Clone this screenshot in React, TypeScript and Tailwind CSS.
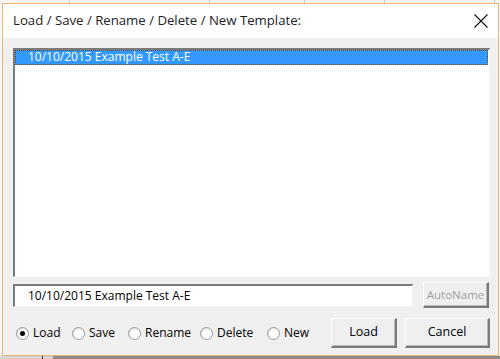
import React from "react"

const font = { fontFamily: '"Open Sans", "Noto Sans", sans-serif' }

function Radio({ label, checked, w }: { label: string; checked?: boolean; w: string }) {
  return (
    <label className={"flex items-center gap-[4px] text-[12px] text-black " + w}>
      <span className="w-[13px] h-[13px] rounded-full border border-[#9a9a9a] bg-white flex items-center justify-center shadow-[inset_1px_1px_1px_rgba(0,0,0,0.12)]">
        {checked && <span className="w-[5px] h-[5px] rounded-full bg-black" />}
      </span>
      <span>{label}</span>
    </label>
  )
}

function WinButton({ label, className, disabled }: { label: string; className: string; disabled?: boolean }) {
  return (
    <button
      className={
        "bg-[#efefef] border-t border-l border-t-white border-l-white border-r-2 border-b-2 border-r-[#7a7a7a] border-b-[#7a7a7a] shadow-[inset_-1px_-1px_0_#b8b8b8] flex items-center justify-center " +
        className +
        (disabled ? " text-[#a0a0a0] text-[11.5px]" : " text-black text-[12.5px]")
      }
    >
      {label}
    </button>
  )
}

export default function App() {
  return (
    <div className="w-[500px] h-[359px] bg-[#f6f6f6] pt-[3px] pl-[2px] overflow-hidden relative" style={font}>
      <div className="absolute top-0 left-0 right-0 h-[3px] flex">
        <div className="w-[70px] border-r border-[#c8c8c8]" />
        <div className="w-[140px] border-r border-[#c8c8c8]" />
        <div className="w-[95px] border-r border-[#c8c8c8]" />
        <div className="w-[80px] border-r border-[#c8c8c8]" />
        <div className="w-[110px] border-r border-[#c8c8c8]" />
      </div>
      <div className="absolute bottom-0 left-0 right-0 h-[3px] flex">
        <div className="w-[42px] bg-[#d4d4d4]" />
        <div className="w-[1px] bg-[#333]" />
        <div className="w-[10px] bg-[#d4d4d4]" />
        <div className="flex-1 bg-[#8a8a8a]" />
      </div>
      <div className="relative w-[497px] h-[353px] border border-[#f0b56c] bg-[#f0f0f0] flex flex-col">
        <div className="h-[34px] bg-white flex items-center justify-between pl-[10px] pr-[10px]">
          <span className="text-[13.2px] text-[#222]">Load / Save / Rename / Delete / New Template:</span>
          <svg width="14" height="14" viewBox="0 0 14 14">
            <path d="M0.5 0.5 L13.5 13.5 M13.5 0.5 L0.5 13.5" stroke="#111" strokeWidth="1.1" fill="none" />
          </svg>
        </div>
        <div className="flex flex-col pl-[10px] pr-[8px] pt-[10px]">
          <div className="h-[229px] bg-white border-t-2 border-l-2 border-t-[#7a7a7a] border-l-[#7a7a7a] border-b border-r border-b-[#f8f8f8] border-r-[#f8f8f8] pr-[1px]">
            <div className="h-[15px] bg-[#3399ff] border border-dotted border-[#6b4a20] text-white text-[12px] leading-[12px] pl-[12px] whitespace-nowrap">
              10/10/2015 Example Test A-E
            </div>
          </div>
          <div className="flex items-center gap-[10px] mt-[5px]">
            <div className="w-[400px] h-[23px] bg-white border-t-2 border-l-2 border-t-[#7a7a7a] border-l-[#7a7a7a] border-b border-r border-b-[#f4f4f4] border-r-[#f4f4f4] flex items-center pl-[13px] text-[12px] text-black">
              10/10/2015 Example Test A-E
            </div>
            <WinButton label="AutoName" className="w-[66px] h-[26px]" disabled />
          </div>
          <div className="flex items-center mt-[10px]">
            <div className="flex items-center pl-[3px] flex-1">
              <Radio label="Load" checked w="w-[56px]" />
              <Radio label="Save" w="w-[56px]" />
              <Radio label="Rename" w="w-[72px]" />
              <Radio label="Delete" w="w-[67px]" />
              <Radio label="New" w="w-[50px]" />
            </div>
            <WinButton label="Load" className="w-[66px] h-[30px]" />
            <WinButton label="Cancel" className="w-[85px] h-[30px] ml-[8px]" />
          </div>
        </div>
      </div>
    </div>
  )
}
